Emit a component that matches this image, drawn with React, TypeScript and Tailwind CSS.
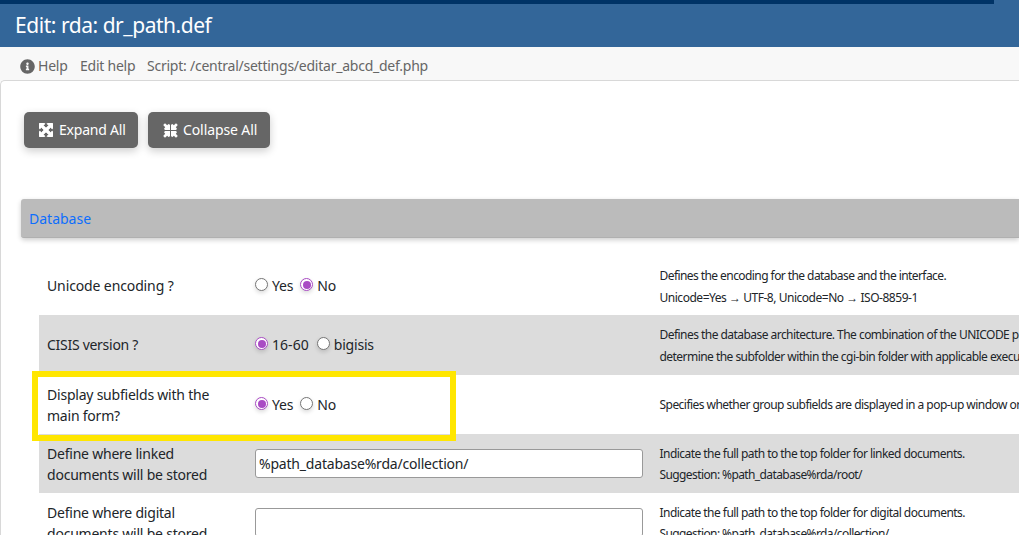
import { type ReactNode } from "react";
import { FaInfoCircle } from "react-icons/fa";

function ExpandIcon() {
  return (
    <svg viewBox="0 0 14 14" className="mr-[6px] size-[14px] shrink-0" fill="white">
      <path d="M.7 0H5.3L6 .8 4.4 2.4 7 5 9.6 2.4 8 .8 8.7 0H13.3Q14 0 14 .7V5.3L13.2 6 11.6 4.4 9 7 11.6 9.6 13.2 8 14 8.7V13.3Q14 14 13.3 14H8.7L8 13.2 9.6 11.6 7 9 4.4 11.6 6 13.2 5.3 14H.7Q0 14 0 13.3V8.7L.8 8 2.4 9.6 5 7 2.4 4.4 .8 6 0 5.3V.7Q0 0 .7 0Z" stroke="white" strokeWidth=".7" />
    </svg>
  );
}

function CollapseIcon() {
  return (
    <svg viewBox="0 0 15 15" className="mr-[5px] size-[15px] shrink-0" fill="white">
      <path d="M2 .2 4.2 2.2 5.4 1.1 7 1.8V7H1.8L1.1 5.4 2.2 4.2.2 2ZM13 .2 10.8 2.2 9.6 1.1 8 1.8V7H13.2L13.9 5.4 12.8 4.2 14.8 2ZM2 14.8 4.2 12.8 5.4 13.9 7 13.2V8H1.8L1.1 9.6 2.2 10.8.2 13ZM13 14.8 10.8 12.8 9.6 13.9 8 13.2V8H13.2L13.9 9.6 12.8 10.8 14.8 13Z" />
    </svg>
  );
}

function Radio({ label, checked = false, fit = "" }: { label: string; checked?: boolean; fit?: string }) {
  return (
    <label className="flex items-center">
      <span
        className={
          checked
            ? "mr-1 -mt-[2px] flex size-[13px] items-center justify-center rounded-full border border-[#a94bc4] bg-white shadow-[0_2px_4px_rgba(0,0,0,0.15)]"
            : "mr-1 -mt-[2px] flex size-[13px] items-center justify-center rounded-full border border-[#767676] bg-white shadow-[0_2px_4px_rgba(0,0,0,0.15)]"
        }
      >
        {checked && <span className="size-[8px] rounded-full bg-[#a94bc4]" />}
      </span>
      <span className={fit}>{label}</span>
    </label>
  );
}

function Row({ label, help, shaded = false, tall = false, children }: {
  label: ReactNode;
  help: ReactNode;
  shaded?: boolean;
  tall?: boolean;
  children: ReactNode;
}) {
  return (
    <div
      className={`grid shrink-0 grid-cols-[208px_404px_1fr] items-center pl-2 ${shaded ? "bg-[#dcdcdc]" : ""} ${tall ? "h-[60px] pb-px" : "h-[59px]"}`}
    >
      <div className="text-[14px] leading-[21px] tracking-[-0.22px]">{label}</div>
      <div className="flex items-center text-[14px] tracking-[-0.2px]">{children}</div>
      <div className="pl-[0.5px] text-[12px] tracking-[-0.54px]">{help}</div>
    </div>
  );
}

export default function App() {
  return (
    <div className="flex h-[535px] w-[1019px] flex-col overflow-hidden bg-[#f8f8f8] font-['Noto_Sans','Open_Sans',sans-serif] whitespace-nowrap text-[#212529]">
      <div className="h-1 shrink-0 bg-[#336699]">
        <div className="h-1 w-[994px] bg-[#003366]" />
      </div>
      <header className="flex h-[43px] shrink-0 items-center bg-[#336699] pl-[15px]">
        <h1 className="pt-px text-[21px] tracking-[-0.46px] text-white">Edit: rda: dr_path.def</h1>
      </header>
      <nav className="flex h-[33px] shrink-0 items-center pt-[5px] pl-5 text-[14px] tracking-[-0.24px] text-[#666666]">
        <FaInfoCircle className="mr-[3px] size-[15px]" />
        <span className="w-[42px] pb-px">Help</span>
        <span className="w-[67px] pb-px">Edit help</span>
        <span className="pb-px">Script: /central/settings/editar_abcd_def.php</span>
      </nav>
      <main className="flex min-h-0 grow flex-col rounded-tl-[5px] border-t border-l border-[#d8d8d8] bg-white">
        <div className="mt-[31px] ml-[23px] flex gap-[10px] text-[14px] tracking-[-0.15px] text-white">
          <button className="flex h-9 w-[114px] items-center rounded-[5px] bg-[#666666] pl-[15px] tracking-[-0.22px] shadow-[0_3px_8px_rgba(0,0,0,0.2)]">
            <ExpandIcon />
            <span className="pb-px">Expand All</span>
          </button>
          <button className="flex h-9 w-[122px] items-center rounded-[5px] bg-[#666666] pl-[15px] tracking-[-0.1px] shadow-[0_3px_8px_rgba(0,0,0,0.2)]">
            <CollapseIcon />
            <span className="pb-px">Collapse All</span>
          </button>
        </div>
        <div className="mt-[51px] ml-5 flex h-[39px] shrink-0 items-center rounded-l-[3px] border-b border-[#b0b0b0] bg-[#bbbbbb] pl-2 text-[14px] text-[#0d6efd] shadow-[0_2px_5px_rgba(0,0,0,0.2)]">
          Database
        </div>
        <section className="relative mt-[18px] ml-[38px] flex flex-col">
          <Row
            label={<span className="tracking-[-0.12px]">Unicode encoding ?</span>}
            help={
              <div className="pt-[2px] leading-[22px]">
                <p className="tracking-[-0.57px]">Defines the encoding for the database and the interface.</p>
                <p className="tracking-[-0.47px]">Unicode=Yes → UTF-8, Unicode=No → ISO-8859-1</p>
              </div>
            }
          >
            <div className="flex gap-[7px]"><Radio label="Yes" /><Radio label="No" checked /></div>
          </Row>
          <Row
            shaded
            tall
            label={<span className="tracking-[-0.28px]">CISIS version ?</span>}
            help={
              <div className="pt-[2px] leading-[22px]">
                <p>Defines the database architecture. The combination of the UNICODE parameter and</p>
                <p>determine the subfolder within the cgi-bin folder with applicable executables</p>
              </div>
            }
          >
            <div className="flex gap-2"><Radio label="16-60" checked fit="tracking-[0.05px]" /><Radio label="bigisis" /></div>
          </Row>
          <Row
            label={<>Display subfields with the<br />main form?</>}
            help={<p className="pt-px">Specifies whether group subfields are displayed in a pop-up window or</p>}
          >
            <div className="flex gap-[7px]"><Radio label="Yes" checked /><Radio label="No" /></div>
          </Row>
          <Row
            shaded
            label={<>Define where linked<br />documents will be stored</>}
            help={
              <div className="leading-[21px]">
                <p>Indicate the full path to the top folder for linked documents.</p>
                <p className="tracking-[-0.6px]">Suggestion: %path_database%rda/root/</p>
              </div>
            }
          >
            <div className="flex h-[29px] w-[388px] items-center rounded-[3px] border border-[#999999] bg-white pl-[3px]">%path_database%rda/collection/</div>
          </Row>
          <Row
            label={<>Define where digital<br />documents will be stored</>}
            help={
              <div className="leading-[21px]">
                <p>Indicate the full path to the top folder for digital documents.</p>
                <p className="tracking-[-0.6px]">Suggestion: %path_database%rda/collection/</p>
              </div>
            }
          >
            <div className="h-[29px] w-[388px] rounded-[3px] border border-[#999999] bg-white" />
          </Row>
          <div className="absolute top-[115px] -left-[7px] h-[70px] w-[424px] border-[6px] border-[#ffe600]" />
        </section>
      </main>
    </div>
  );
}
